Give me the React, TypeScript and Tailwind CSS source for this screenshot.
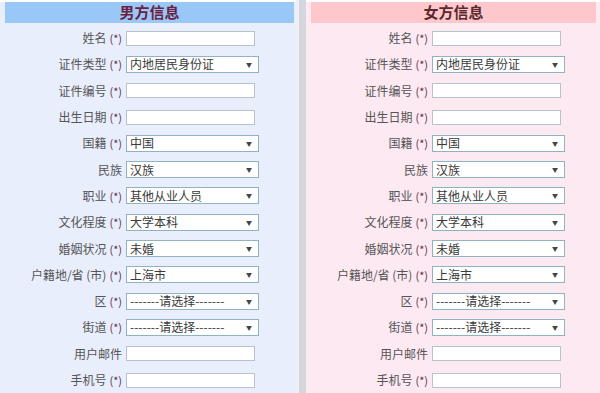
type Field = {
  label: string;
  required?: boolean;
  kind: 'input' | 'select';
  value?: string;
};

const fields: Field[] = [
  { label: '姓名', required: true, kind: 'input' },
  { label: '证件类型', required: true, kind: 'select', value: '内地居民身份证' },
  { label: '证件编号', required: true, kind: 'input' },
  { label: '出生日期', required: true, kind: 'input' },
  { label: '国籍', required: true, kind: 'select', value: '中国' },
  { label: '民族', kind: 'select', value: '汉族' },
  { label: '职业', required: true, kind: 'select', value: '其他从业人员' },
  { label: '文化程度', required: true, kind: 'select', value: '大学本科' },
  { label: '婚姻状况', required: true, kind: 'select', value: '未婚' },
  { label: '户籍地/省 (市)', required: true, kind: 'select', value: '上海市' },
  { label: '区', required: true, kind: 'select', value: '-------请选择-------' },
  { label: '街道', required: true, kind: 'select', value: '-------请选择-------' },
  { label: '用户邮件', kind: 'input' },
  { label: '手机号', required: true, kind: 'input' },
];

function Row({ f }: { f: Field }) {
  return (
    <div className="flex items-center h-[26.3px]">
      <div className="w-[121px] pr-[4px] text-right text-[12px] text-[#555] whitespace-nowrap">
        {f.label}
        {f.required ? <span className="text-[11px] text-[#5a3048] ml-[3px]">(*)</span> : null}
      </div>
      {f.kind === 'input' ? (
        <div className="w-[129px] h-[15px] bg-white border border-[#b9c1cb]" />
      ) : (
        <div className="w-[133px] h-[17px] bg-white border border-[#8fb3bf] flex items-center justify-between pl-[3px] pr-[6px]">
          <span className="text-[12px] leading-none text-[#3a3a3a] whitespace-nowrap">{f.value}</span>
          <span className="text-[6px] text-[#444]">▼</span>
        </div>
      )}
    </div>
  );
}

function Panel({ title, headBg, bg, titleColor, pad }: { title: string; headBg: string; bg: string; titleColor: string; pad: string }) {
  return (
    <div className={`h-full ${bg} ${pad}`}>
      <div className={`h-[21px] mt-[2px] mb-[2px] ${headBg} flex items-center justify-center`}>
        <span className={`text-[15px] font-bold ${titleColor}`}>{title}</span>
      </div>
      {fields.map((f) => (
        <Row key={f.label} f={f} />
      ))}
    </div>
  );
}

export default function App() {
  return (
    <div
      className="w-[600px] h-[393px] overflow-hidden flex"
      style={{ fontFamily: '"Noto Sans CJK SC", "Noto Sans", sans-serif' }}
    >
      <div className="w-[296px]">
        <Panel title="男方信息" headBg="bg-[#99c8f6]" bg="bg-[#e9eefc]" titleColor="text-[#6b1f45]" pad="pl-[5px] pr-[2px]" />
      </div>
      <div className="w-[3px] bg-[#eef0f6]" />
      <div className="w-[7px] bg-[#d6d6de]" />
      <div className="flex-1">
        <Panel title="女方信息" headBg="bg-[#fdc7cb]" bg="bg-[#fde9f2]" titleColor="text-[#5a2a30]" pad="pl-[5px] pr-[4px]" />
      </div>
    </div>
  );
}
